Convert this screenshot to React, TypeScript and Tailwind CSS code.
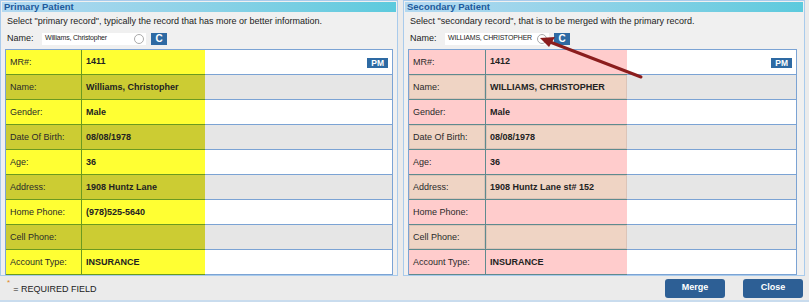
type Field = { label: string; value: string };

const primary: Field[] = [
  { label: "MR#:", value: "1411" },
  { label: "Name:", value: "Williams, Christopher" },
  { label: "Gender:", value: "Male" },
  { label: "Date Of Birth:", value: "08/08/1978" },
  { label: "Age:", value: "36" },
  { label: "Address:", value: "1908 Huntz Lane" },
  { label: "Home Phone:", value: "(978)525-5640" },
  { label: "Cell Phone:", value: "" },
  { label: "Account Type:", value: "INSURANCE" },
];

const secondary: Field[] = [
  { label: "MR#:", value: "1412" },
  { label: "Name:", value: "WILLIAMS, CHRISTOPHER" },
  { label: "Gender:", value: "Male" },
  { label: "Date Of Birth:", value: "08/08/1978" },
  { label: "Age:", value: "36" },
  { label: "Address:", value: "1908 Huntz Lane st# 152" },
  { label: "Home Phone:", value: "" },
  { label: "Cell Phone:", value: "" },
  { label: "Account Type:", value: "INSURANCE" },
];

const PmBadge = () => (
  <span className="bg-[#2e6aa3] text-white text-[8.5px] font-bold leading-[10px] px-[4px] h-[10px] flex items-center">
    PM
  </span>
);

const RecordTable = ({
  rows,
  side,
}: {
  rows: Field[];
  side: "primary" | "secondary";
}) => {
  const isPrimary = side === "primary";
  return (
    <div
      className={`border-l border-t border-[#7ba3d4] ${
        isPrimary ? "w-[388px]" : "w-[389px]"
      }`}
    >
      {rows.map((r, i) => {
        const even = i % 2 === 1;
        const hl = isPrimary
          ? even
            ? "bg-[#cccc33]"
            : "bg-[#ffff33]"
          : even
          ? "bg-[#efd4c4]"
          : "bg-[#ffcccc]";
        const hlBorder = isPrimary ? "border-[#6b9a1f]" : "border-[#5e8a8e]";
        const inset =
          !isPrimary && even ? "shadow-[inset_0_0_0_1px_#dcc4b8]" : "";
        return (
          <div key={r.label} className="flex h-[25px]">
            <div
              className={`${isPrimary ? "w-[76px]" : "w-[77px]"} ${hl} ${inset} border-r border-b ${hlBorder} flex items-center pl-[4px] pt-[1px] text-[9px] text-[#2a2a2a]`}
            >
              {r.label}
            </div>
            <div
              className={`${isPrimary ? "w-[123px]" : "w-[141px]"} ${hl} ${inset} border-b ${hlBorder} flex pl-[4px] text-[9px] font-bold text-[#222] whitespace-nowrap ${
                i === 0 ? "items-start pt-[5px]" : "items-center pt-[1px]"
              }`}
            >
              {r.value}
            </div>
            <div
              className={`flex-1 border-b border-r border-[#7ba3d4] ${
                even ? "bg-[#e6e6e6]" : "bg-white"
              } flex items-center justify-end pr-[4px]`}
            >
              {i === 0 && (
                <div className="self-start mt-[8px]">
                  <PmBadge />
                </div>
              )}
            </div>
          </div>
        );
      })}
    </div>
  );
};

const Panel = ({
  title,
  hint,
  name,
  rows,
  side,
  width,
}: {
  title: string;
  hint: string;
  name: string;
  rows: Field[];
  side: "primary" | "secondary";
  width: string;
}) => (
  <div
    className={`${width} h-[276px] border border-[#a9cbec] bg-[#f0f0f0] flex flex-col`}
  >
    <div className="h-[11px] mx-[1px] mt-[1px] bg-gradient-to-r from-[#b3d9f1] to-[#5ccadd] flex items-center pl-[2px]">
      <span className="text-[9.5px] font-bold text-[#1d5a9c] leading-none">
        {title}
      </span>
    </div>
    <div className="pl-[6px] pt-[3px] text-[9px] text-[#222] leading-[13px]">
      {hint}
    </div>
    <div className="flex items-center pl-[6px] mt-[4px] h-[13px] text-[9px] text-[#222]">
      <span className="w-[35px]">Name:</span>
      <div className="relative w-[104px] h-[12px] bg-white flex items-center pl-[3px] overflow-hidden">
        <span className="text-[7px] tracking-[-0.2px] text-[#222] whitespace-nowrap">
          {name}
        </span>
        <span className="absolute right-[2px] top-[1px] w-[10px] h-[10px] rounded-full border border-[#aaa]" />
      </div>
      <span className="ml-[5px] w-[16px] h-[12px] bg-[#2e6aa3] text-white text-[10px] font-bold flex items-center justify-center">
        C
      </span>
    </div>
    <div className="pl-[4px] mt-[4px]">
      <RecordTable rows={rows} side={side} />
    </div>
  </div>
);

export default function App() {
  return (
    <div
      className="relative w-[809px] h-[302px] bg-[#ebebeb] overflow-hidden"
      style={{ fontFamily: '"Liberation Sans", Arial, sans-serif' }}
    >
      <div className="flex gap-[5px]">
        <Panel
          title="Primary Patient"
          hint={'Select "primary record", typically the record that has more or better information.'}
          name="Williams, Christopher"
          rows={primary}
          side="primary"
          width="w-[398px]"
        />
        <Panel
          title="Secondary Patient"
          hint={'Select "secondary record", that is to be merged with the primary record.'}
          name="WILLIAMS, CHRISTOPHER"
          rows={secondary}
          side="secondary"
          width="w-[402px]"
        />
      </div>
      <div className="flex items-center justify-between h-[26px] pl-[7px] pr-[6px] border-b-2 border-[#c9dcee]">
        <div className="flex items-start text-[9px] text-[#222] pt-[3px]">
          <span className="text-[#e08a1e] text-[8px] leading-none -mt-[4px] mr-[3px]">*</span>
          <span>= REQUIRED FIELD</span>
        </div>
        <div className="flex gap-[18px]">
          <button className="w-[60px] h-[19px] rounded-[3px] bg-[#2d5f95] text-white text-[9px] font-bold">
            Merge
          </button>
          <button className="w-[60px] h-[19px] rounded-[3px] bg-[#2d5f95] text-white text-[9px] font-bold">
            Close
          </button>
        </div>
      </div>
      <svg
        className="absolute left-0 top-0 pointer-events-none"
        width="809"
        height="302"
      >
        <line
          x1="641"
          y1="77"
          x2="550"
          y2="42"
          stroke="#8b1d1d"
          strokeWidth="3"
          strokeLinecap="round"
        />
        <polygon points="540,38 555,37 549,47" fill="#8b1d1d" />
      </svg>
    </div>
  );
}
